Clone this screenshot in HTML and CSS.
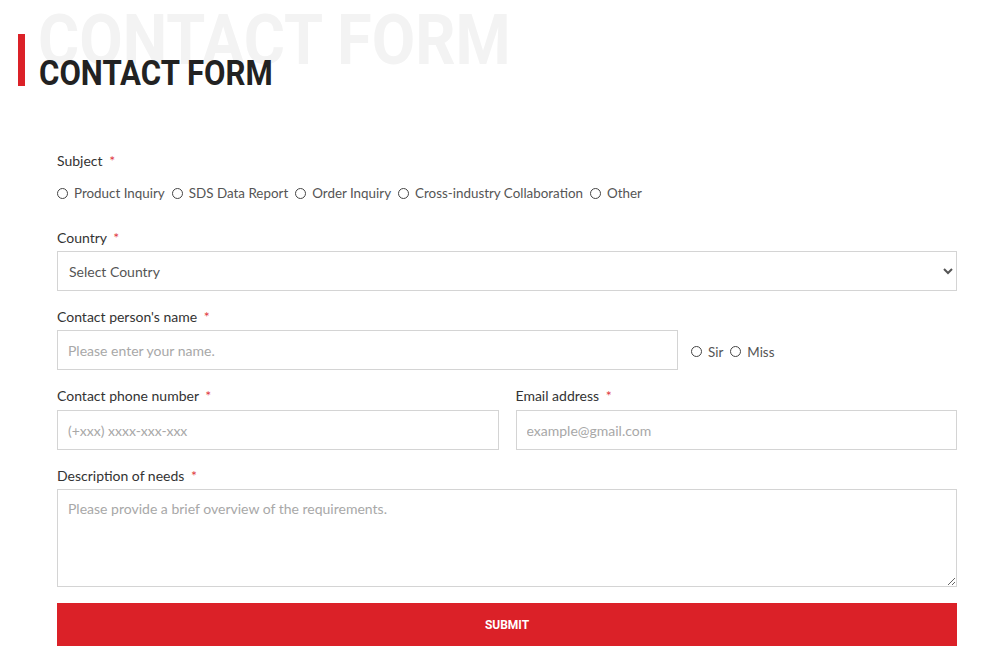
FILE: index.html
```html
<!DOCTYPE html>
<html>
<head>
    <title>Contact Form</title>
    <link rel="stylesheet" href="styles.css">
</head>
<body>
    <div class="section-title">
        <span class="title-shadow">CONTACT FORM</span>
        <h2 class="title"><span class="title-text">CONTACT FORM</span></h2>
    </div>

    <form class="contact-form">
        <div class="field">
            <label class="field-label">Subject <span class="req">*</span></label>
            <div class="radio-row subject-row">
                <label class="radio"><input type="radio" name="subject"> Product Inquiry</label>
                <label class="radio"><input type="radio" name="subject"> SDS Data Report</label>
                <label class="radio"><input type="radio" name="subject"> Order Inquiry</label>
                <label class="radio"><input type="radio" name="subject"> Cross-industry Collaboration</label>
                <label class="radio"><input type="radio" name="subject"> Other</label>
            </div>
        </div>

        <div class="field">
            <label class="field-label">Country <span class="req">*</span></label>
            <select class="input select">
                <option>Select Country</option>
            </select>
        </div>

        <div class="field">
            <label class="field-label">Contact person's name <span class="req">*</span></label>
            <div class="name-row">
                <input class="input name-input" type="text" placeholder="Please enter your name.">
                <div class="radio-row">
                    <label class="radio"><input type="radio" name="title"> Sir</label>
                    <label class="radio"><input type="radio" name="title"> Miss</label>
                </div>
            </div>
        </div>

        <div class="field two-col">
            <div>
                <label class="field-label">Contact phone number <span class="req">*</span></label>
                <input class="input" type="text" placeholder="(+xxx) xxxx-xxx-xxx">
            </div>
            <div>
                <label class="field-label">Email address <span class="req">*</span></label>
                <input class="input" type="text" placeholder="example@gmail.com">
            </div>
        </div>

        <div class="field">
            <label class="field-label">Description of needs <span class="req">*</span></label>
            <textarea class="input textarea" placeholder="Please provide a brief overview of the requirements."></textarea>
        </div>

        <button type="submit" class="submit">SUBMIT</button>
    </form>
</body>
</html>
```

FILE: styles.css
```css
body {
    margin: 0;
    font-family: 'Lato', sans-serif;
    color: #333333;
    background: #ffffff;
}

.section-title {
    position: relative;
    height: 115px;
    padding-left: 18px;
}

.title-shadow {
    position: absolute;
    left: 38px;
    top: 2px;
    font-family: 'Roboto', sans-serif;
    font-weight: 700;
    font-size: 70px;
    line-height: 76px;
    color: #f3f3f3;
    white-space: nowrap;
    transform: scaleX(0.9);
    transform-origin: left center;
}

.title {
    position: relative;
    margin: 0;
    top: 34px;
    height: 52px;
    border-left: 7px solid #db2128;
    padding-left: 14px;
    font-family: 'Roboto', sans-serif;
    font-weight: 700;
    font-size: 35px;
    line-height: 80px;
    color: #222222;
    box-sizing: border-box;
    white-space: nowrap;
}

.title-text {
    display: inline-block;
    transform: scaleX(0.89);
    transform-origin: left center;
}

.contact-form {
    width: 900px;
    margin: 36px 0 0 57px;
}

.field {
    margin-bottom: 16px;
}

.field-label {
    display: block;
    font-size: 14px;
    line-height: 20px;
    margin-bottom: 3px;
    color: #333333;
}

.req {
    color: #e0393f;
    margin-left: 3px;
}

.radio-row {
    display: flex;
    align-items: center;
    gap: 7px;
}

.subject-row {
    margin-top: 12px;
    margin-bottom: 25px;
}

.radio {
    display: flex;
    align-items: center;
    gap: 6px;
    font-size: 13.4px;
    line-height: 20px;
    color: #555555;
}

.radio input {
    appearance: none;
    margin: 0;
    width: 11px;
    height: 11px;
    border: 1px solid #444444;
    border-radius: 50%;
    box-sizing: border-box;
}

.input {
    display: block;
    width: 100%;
    height: 40px;
    box-sizing: border-box;
    border: 1px solid #d4d4d4;
    border-radius: 0;
    background: #ffffff;
    padding: 0 10px;
    font-family: 'Lato', sans-serif;
    font-size: 14px;
    color: #555555;
}

.select {
    padding: 0 7px;
}

.input::placeholder {
    color: #a8a8a8;
}

.name-row {
    display: flex;
    align-items: center;
    gap: 13px;
}

.name-input {
    width: 621px;
    flex: none;
}

.name-row .radio-row {
    padding-top: 3px;
}

.two-col {
    display: grid;
    grid-template-columns: 1fr 1fr;
    column-gap: 17px;
}

.two-col .field-label {
    margin-bottom: 4px;
}

.textarea {
    height: 98px;
    padding: 10px;
    resize: vertical;
}

.submit {
    display: block;
    width: 100%;
    height: 43px;
    border: none;
    background: #db2128;
    color: #ffffff;
    font-family: 'Roboto', sans-serif;
    font-weight: 700;
    font-size: 12px;
    cursor: pointer;
}
```
